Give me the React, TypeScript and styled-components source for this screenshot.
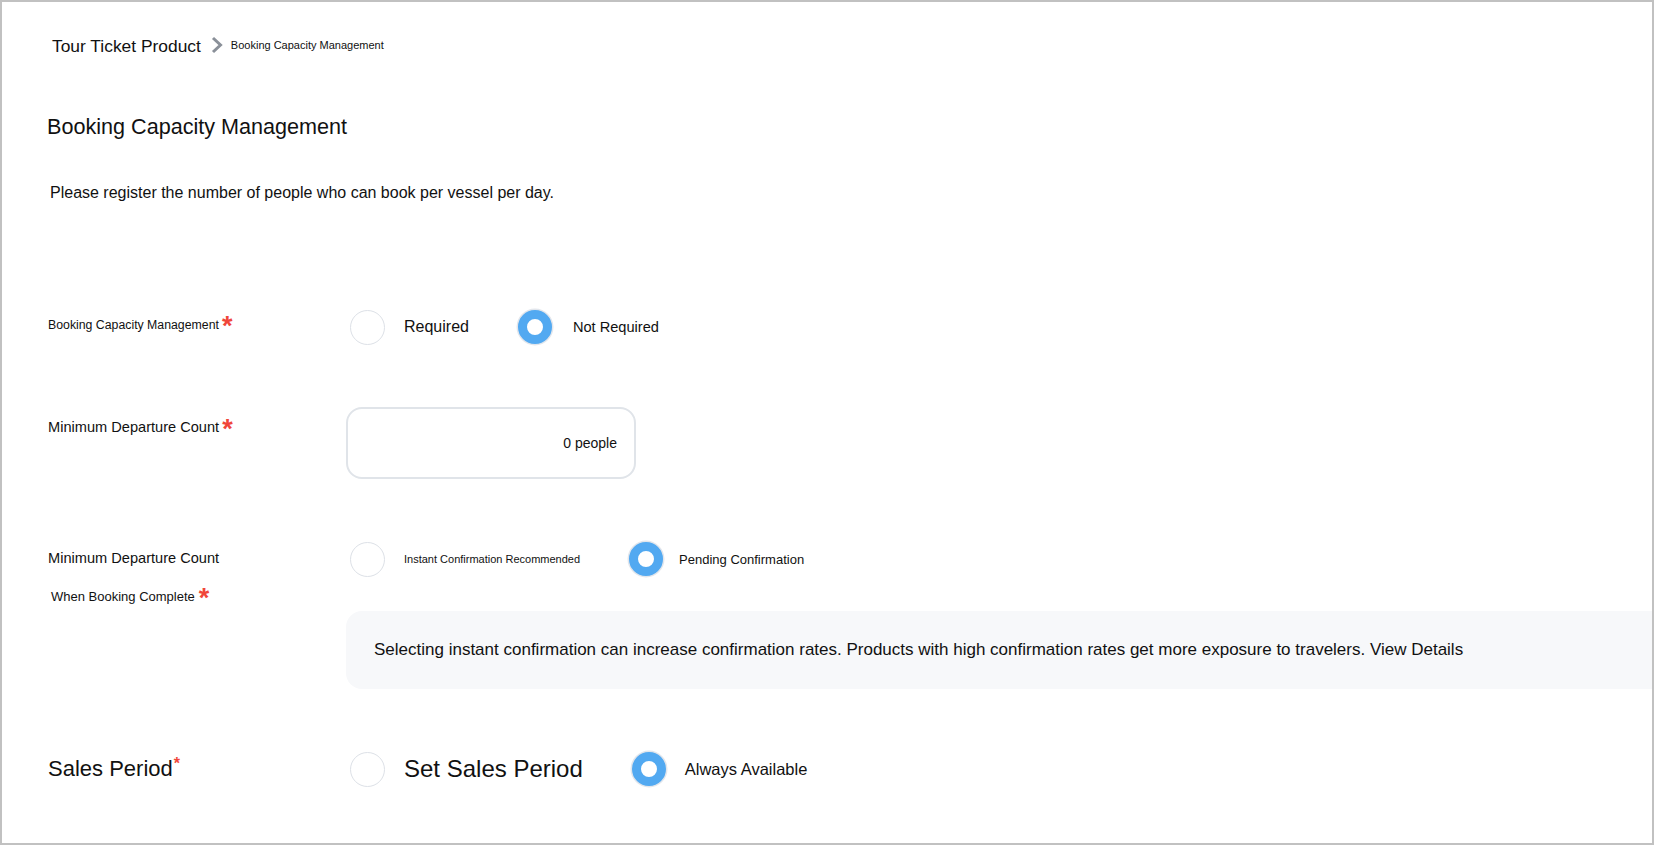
import styled, { createGlobalStyle } from 'styled-components';

const GlobalStyle = createGlobalStyle`
    body {
        margin: 0;
        font-family: "Liberation Sans", Arial, sans-serif;
        color: #111;
        background: #fff;
    }
`;

type OptionItem = { label: string; size: number; checked?: boolean };

const RadioGroup = ({ options, spacing = 19 }: { options: OptionItem[]; spacing?: number }) => (
    <Options>
        {options.map((opt) => (
            <Option key={opt.label} $gap={opt.checked ? spacing : 19}>
                <Circle $checked={!!opt.checked} />
                <OptionText $size={opt.size}>{opt.label}</OptionText>
            </Option>
        ))}
    </Options>
);

const App = () => {
    return (
        <>
            <GlobalStyle />
            <Frame>
                <Breadcrumb>
                    <Crumb>Tour Ticket Product</Crumb>
                    <svg width="12" height="18" viewBox="0 0 12 18">
                        <path d="M2 2l7.5 7-7.5 7" fill="none" stroke="#8a9099" strokeWidth="3" />
                    </svg>
                    <CrumbCurrent>Booking Capacity Management</CrumbCurrent>
                </Breadcrumb>

                <Title>Booking Capacity Management</Title>
                <Description>Please register the number of people who can book per vessel per day.</Description>

                <Form>
                    <Label $size={12.3} $pad={6}>
                        Booking Capacity Management<Req>*</Req>
                    </Label>
                    <RadioGroup
                        spacing={21}
                        options={[
                            { label: 'Required', size: 16 },
                            { label: 'Not Required', size: 14.6, checked: true },
                        ]}
                    />

                    <Label $size={14.6} $pad={10} $gap={62}>
                        Minimum Departure Count<Req>*</Req>
                    </Label>
                    <Control $gap={62}>
                        <CountBox>0 people</CountBox>
                    </Control>

                    <Label $size={14.6} $pad={7} $gap={62}>
                        Minimum Departure Count
                        <SubLabel>
                            When Booking Complete<Req $space={4}>*</Req>
                        </SubLabel>
                    </Label>
                    <Control $gap={62}>
                        <RadioGroup
                            spacing={16}
                            options={[
                                { label: 'Instant Confirmation Recommended', size: 11 },
                                { label: 'Pending Confirmation', size: 13, checked: true },
                            ]}
                        />
                        <Notice>
                            Selecting instant confirmation can increase confirmation rates. Products with high
                            confirmation rates get more exposure to travelers. View Details
                        </Notice>
                    </Control>

                    <Label $size={22} $pad={0} $gap={62} $center>
                        Sales Period<SmallReq>*</SmallReq>
                    </Label>
                    <Control $gap={62}>
                        <RadioGroup
                            options={[
                                { label: 'Set Sales Period', size: 24 },
                                { label: 'Always Available', size: 16.5, checked: true },
                            ]}
                        />
                    </Control>
                </Form>
            </Frame>
        </>
    );
};

export default App;

const Frame = styled.div`
    box-sizing: border-box;
    height: 845px;
    border: 2px solid #c1c1c1;
    overflow: hidden;
    padding-left: 45px;
`;

const Breadcrumb = styled.div`
    display: flex;
    align-items: center;
    height: 30px;
    margin-top: 29px;
    padding-left: 5px;

    svg {
        margin: 0 8px 2px 10px;
    }
`;

const Crumb = styled.span`
    font-size: 17.4px;
`;

const CrumbCurrent = styled.span`
    font-size: 11px;
    margin-bottom: 3px;
`;

const Title = styled.h1`
    margin: 51px 0 0 0;
    font-size: 21.6px;
    font-weight: 400;
    line-height: 30px;
`;

const Description = styled.p`
    margin: 39px 0 0 3px;
    font-size: 16px;
    line-height: 24px;
`;

const Form = styled.div`
    display: grid;
    grid-template-columns: 299px 1fr;
    margin-top: 104px;
`;

const Label = styled.div<{ $size: number; $pad: number; $gap?: number; $center?: boolean }>`
    font-size: ${(p) => p.$size}px;
    line-height: 20px;
    padding-top: ${(p) => p.$pad}px;
    margin-top: ${(p) => p.$gap || 0}px;
    padding-left: 1px;
    align-self: ${(p) => (p.$center ? 'center' : 'start')};
    white-space: nowrap;
`;

const SubLabel = styled.div`
    font-size: 13px;
    margin-top: 19px;
    padding-left: 3px;
`;

const Req = styled.span<{ $space?: number }>`
    color: #f0463a;
    font-size: 27px;
    font-weight: 700;
    line-height: 0;
    margin-left: ${(p) => p.$space ?? 3}px;
    vertical-align: -6px;
`;

const SmallReq = styled.span`
    color: #f0463a;
    font-size: 16px;
    font-weight: 700;
    line-height: 0;
    margin-left: 1px;
    vertical-align: 7px;
`;

const Control = styled.div<{ $gap?: number }>`
    margin-top: ${(p) => p.$gap || 0}px;
    min-width: 0;
`;

const Options = styled.div`
    display: flex;
    align-items: center;
    gap: 49px;
    height: 36px;
    padding-left: 4px;
`;

const Option = styled.label<{ $gap: number }>`
    display: flex;
    align-items: center;
    gap: ${(p) => p.$gap}px;
`;

const Circle = styled.span<{ $checked: boolean }>`
    box-sizing: border-box;
    width: ${(p) => (p.$checked ? 34 : 35)}px;
    height: ${(p) => (p.$checked ? 34 : 35)}px;
    border-radius: 50%;
    background: #fff;
    border: ${(p) => (p.$checked ? '9px solid #52a9f1' : '1.5px solid #dde1e7')};
    box-shadow: ${(p) => (p.$checked ? '0 0 0 1.5px #e2e6ec' : 'none')};
    flex-shrink: 0;
`;

const OptionText = styled.span<{ $size: number }>`
    font-size: ${(p) => p.$size}px;
    white-space: nowrap;
`;

const CountBox = styled.div`
    box-sizing: border-box;
    width: 290px;
    height: 72px;
    border: 2px solid #e0e4e9;
    border-radius: 16px;
    display: flex;
    align-items: center;
    justify-content: flex-end;
    padding-right: 17px;
    font-size: 14px;
`;

const Notice = styled.div`
    box-sizing: border-box;
    width: calc(100% + 40px);
    height: 78px;
    margin-top: 34px;
    border-radius: 16px;
    background: #f7f8fa;
    display: flex;
    align-items: center;
    padding-left: 28px;
    font-size: 17px;
    white-space: nowrap;
`;
